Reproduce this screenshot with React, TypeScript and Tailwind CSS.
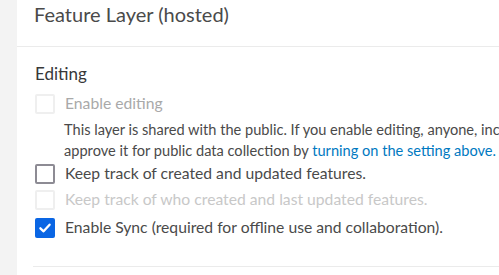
import React from "react";

const font = { fontFamily: '"Lato", "Open Sans", sans-serif' };

function Box({ state }: { state: "disabled" | "off" | "on" }) {
  if (state === "on") {
    return (
      <div className="w-[20px] h-[20px] rounded-[2px] bg-[#0a66e4] flex items-center justify-center shrink-0">
        <svg width="14" height="14" viewBox="0 0 14 14" fill="none">
          <path d="M2.4 7.3 L5.6 10.3 L11.6 3.7" stroke="white" strokeWidth="2.3" strokeLinecap="round" strokeLinejoin="round" />
        </svg>
      </div>
    );
  }
  return (
    <div
      className={
        "w-[20px] h-[20px] rounded-[2px] shrink-0 border-2 " +
        (state === "off" ? "border-[#8d8b94]" : "border-[#efefef]")
      }
    />
  );
}

export default function App() {
  return (
    <div className="w-[499px] h-[275px] flex overflow-hidden bg-white" style={font}>
      <div className="w-[17px] shrink-0 bg-[#f3f3f3]" />
      <div className="flex-1 min-w-0 flex flex-col">
        <div className="h-[47px] shrink-0 border-b border-[#ebebeb] pl-[17px]">
          <div className="text-[20px] leading-[28px] text-[#4a4a4a] whitespace-nowrap">Feature Layer (hosted)</div>
        </div>
        <div className="ml-[16px] border-b border-[#ebebeb] h-[220px] flex flex-col">
          <div className="mt-[16px] pl-[2px] text-[17px] leading-[22px] text-[#383838]">Editing</div>
          <div className="mt-[7px] flex items-center gap-[10px] pl-[2px] h-[24px]">
            <Box state="disabled" />
            <span className="text-[15.7px] text-[#a9a9a9] whitespace-nowrap">Enable editing</span>
          </div>
          <div className="mt-[3px] pl-[31px] text-[14.6px] leading-[21px] text-[#4a4a4a] whitespace-nowrap">
            <div>This layer is shared with the public. If you enable editing, anyone, including anonymous users, can edit.</div>
            <div>
              approve it for public data collection by{" "}
              <span className="text-[#0079c1]">turning on the setting above.</span>
            </div>
          </div>
          <div className="flex items-center gap-[10px] pl-[2px] h-[25px]">
            <Box state="off" />
            <span className="text-[15.7px] text-[#4a4a4a] whitespace-nowrap">Keep track of created and updated features.</span>
          </div>
          <div className="flex items-center gap-[10px] pl-[2px] h-[27px]">
            <Box state="disabled" />
            <span className="text-[15.7px] text-[#c8c8c8] whitespace-nowrap">Keep track of who created and last updated features.</span>
          </div>
          <div className="mt-[1px] flex items-center gap-[10px] pl-[2px] h-[27px]">
            <Box state="on" />
            <span className="text-[15.7px] text-[#4a4a4a] whitespace-nowrap">Enable Sync (required for offline use and collaboration).</span>
          </div>
        </div>
      </div>
    </div>
  );
}
